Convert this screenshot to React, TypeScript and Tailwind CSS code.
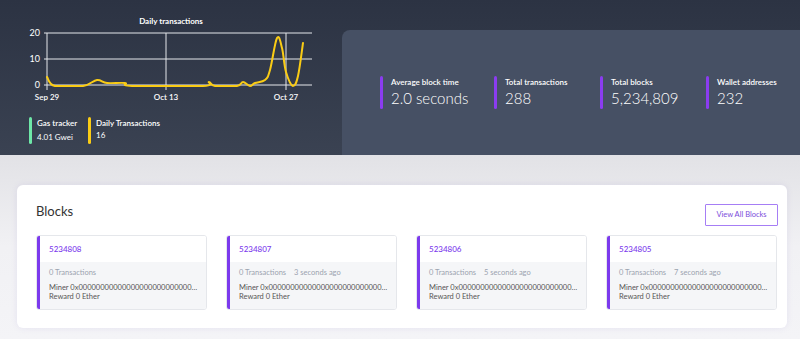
import React from "react";

const pts: [number, number][] = [
  [47, 77], [55, 86], [83, 86], [97, 80], [107, 83], [125, 83], [132, 86],
  [203, 86], [209, 82], [215, 86], [237, 86], [243, 82], [250, 86], [255, 83],
  [265, 80], [270, 70], [277, 38], [282, 48], [286, 72], [293, 86], [298, 76], [303, 43],
];

function smoothPath(p: [number, number][]) {
  let d = `M${p[0][0]},${p[0][1]}`;
  for (let i = 0; i < p.length - 1; i++) {
    const p0 = p[i - 1] || p[i];
    const p1 = p[i];
    const p2 = p[i + 1];
    const p3 = p[i + 2] || p2;
    const t = 0.18;
    const c1x = p1[0] + (p2[0] - p0[0]) * t;
    const c1y = p1[1] + (p2[1] - p0[1]) * t;
    const c2x = p2[0] - (p3[0] - p1[0]) * t;
    const c2y = p2[1] - (p3[1] - p1[1]) * t;
    d += ` C${c1x.toFixed(1)},${Math.min(86, c1y).toFixed(1)} ${c2x.toFixed(1)},${Math.min(86, c2y).toFixed(1)} ${p2[0]},${p2[1]}`;
  }
  return d;
}

function Chart() {
  return (
    <svg width="342" height="105" className="block">
      <text x="171" y="24" textAnchor="middle" fill="#fff" fontSize="8" fontWeight="700" fontFamily="Lato, sans-serif">
        Daily transactions
      </text>
      {[33, 59, 85].map((y) => (
        <line key={y} x1="44" x2="312" y1={y} y2={y} stroke="#e5e7eb" strokeWidth="1" />
      ))}
      {[47, 166, 286].map((x) => (
        <line key={x} x1={x} x2={x} y1="33" y2="90" stroke="#e5e7eb" strokeWidth="1" />
      ))}
      <text x="40" y="36" textAnchor="end" fill="#fff" fontSize="9" fontFamily="Lato, sans-serif">20</text>
      <text x="40" y="62" textAnchor="end" fill="#fff" fontSize="9" fontFamily="Lato, sans-serif">10</text>
      <text x="40" y="88" textAnchor="end" fill="#fff" fontSize="9" fontFamily="Lato, sans-serif">0</text>
      <text x="47" y="100" textAnchor="middle" fill="#fff" fontSize="8" fontWeight="600" fontFamily="Lato, sans-serif">Sep 29</text>
      <text x="166" y="100" textAnchor="middle" fill="#fff" fontSize="8" fontWeight="600" fontFamily="Lato, sans-serif">Oct 13</text>
      <text x="286" y="100" textAnchor="middle" fill="#fff" fontSize="8" fontWeight="600" fontFamily="Lato, sans-serif">Oct 27</text>
      <path d={smoothPath(pts)} fill="none" stroke="#facc15" strokeWidth="2" strokeLinejoin="round" strokeLinecap="round" />
    </svg>
  );
}

function Stat({ label, value, w }: { label: string; value: string; w: string }) {
  return (
    <div className={`flex ${w}`}>
      <div className="w-[3px] h-[33px] bg-[#8b3cf0] rounded-sm" />
      <div className="pl-[8px] flex flex-col">
        <div className="text-[8px] font-semibold text-white leading-[10px] mt-[1px]">{label}</div>
        <div className="text-[15px] font-light text-white leading-[18px] mt-[2px]">{value}</div>
      </div>
    </div>
  );
}

function BlockCard({ num, ago }: { num: string; ago?: string }) {
  return (
    <div className="flex-1 flex border border-[#e5e7eb] rounded-[3px] overflow-hidden h-[75px] min-w-0">
      <div className="w-[3px] bg-[#7c3aed]" />
      <div className="flex-1 flex flex-col min-w-0">
        <div className="h-[26px] bg-white pl-[9px] flex items-center text-[8px] text-[#7c3aed] font-medium">{num}</div>
        <div className="flex-1 bg-[#f5f6f8] pl-[9px] pr-[8px] pt-[6px]">
          <div className="text-[7.5px] text-[#9ca3af] leading-[10px] flex gap-[8px]">
            <span>0 Transactions</span>
            {ago && <span>{ago}</span>}
          </div>
          <div className="text-[7.5px] text-[#555] leading-[9px] mt-[5px] whitespace-nowrap overflow-hidden text-ellipsis">
            Miner 0x00000000000000000000000000…
          </div>
          <div className="text-[7.5px] text-[#555] leading-[9px]">Reward 0 Ether</div>
        </div>
      </div>
    </div>
  );
}

export default function App() {
  return (
    <div className="w-[800px] h-[339px] overflow-hidden bg-[#f4f4f7] font-['Lato',sans-serif] flex flex-col">
      <div className="h-[155px] flex bg-gradient-to-b from-[#2c3343] to-[#3a4252]">
        <div className="w-[342px] flex flex-col">
          <Chart />
          <div className="flex pl-[29px] mt-[12px]">
            <div className="flex w-[59px]">
              <div className="w-[3px] h-[27px] bg-[#6ee7a8] rounded-sm" />
              <div className="pl-[5px]">
                <div className="text-[8px] font-semibold text-white leading-[10px] mt-[1px]">Gas tracker</div>
                <div className="text-[8px] text-white leading-[10px] mt-[4px]">4.01 Gwei</div>
              </div>
            </div>
            <div className="flex">
              <div className="w-[3px] h-[27px] bg-[#facc15] rounded-sm" />
              <div className="pl-[5px]">
                <div className="text-[8px] font-semibold text-white leading-[10px] mt-[1px]">Daily Transactions</div>
                <div className="text-[8px] text-white leading-[10px] mt-[2px]">16</div>
              </div>
            </div>
          </div>
        </div>
        <div className="flex-1 mt-[30px] rounded-tl-[8px] bg-[#465064] flex items-center pl-[38px] pb-[1px]">
          <Stat label="Average block time" value="2.0 seconds" w="w-[114px]" />
          <Stat label="Total transactions" value="288" w="w-[106px]" />
          <Stat label="Total blocks" value="5,234,809" w="w-[106px]" />
          <Stat label="Wallet addresses" value="232" w="w-[80px]" />
        </div>
      </div>
      <div className="flex-1 bg-gradient-to-b from-[#e2e2e6] via-[#f1f1f4] to-[#f4f4f7] pt-[30px] pl-[17px] pr-[13px]">
        <div className="h-[143px] bg-white rounded-[6px] shadow-[0_0_6px_rgba(120,110,200,0.12)] pl-[19px] pr-[10px] pt-[19px]">
          <div className="flex items-start justify-between">
            <div className="text-[13px] text-[#333] leading-[14px] mt-[0px]">Blocks</div>
            <button className="h-[22px] w-[73px] -mr-[1px] border border-[#a67ef5] text-[#7c4ddb] text-[7.5px] rounded-[1px] bg-white">
              View All Blocks
            </button>
          </div>
          <div className="flex gap-[19px] mt-[9px]">
            <BlockCard num="5234808" />
            <BlockCard num="5234807" ago="3 seconds ago" />
            <BlockCard num="5234806" ago="5 seconds ago" />
            <BlockCard num="5234805" ago="7 seconds ago" />
          </div>
        </div>
      </div>
    </div>
  );
}
